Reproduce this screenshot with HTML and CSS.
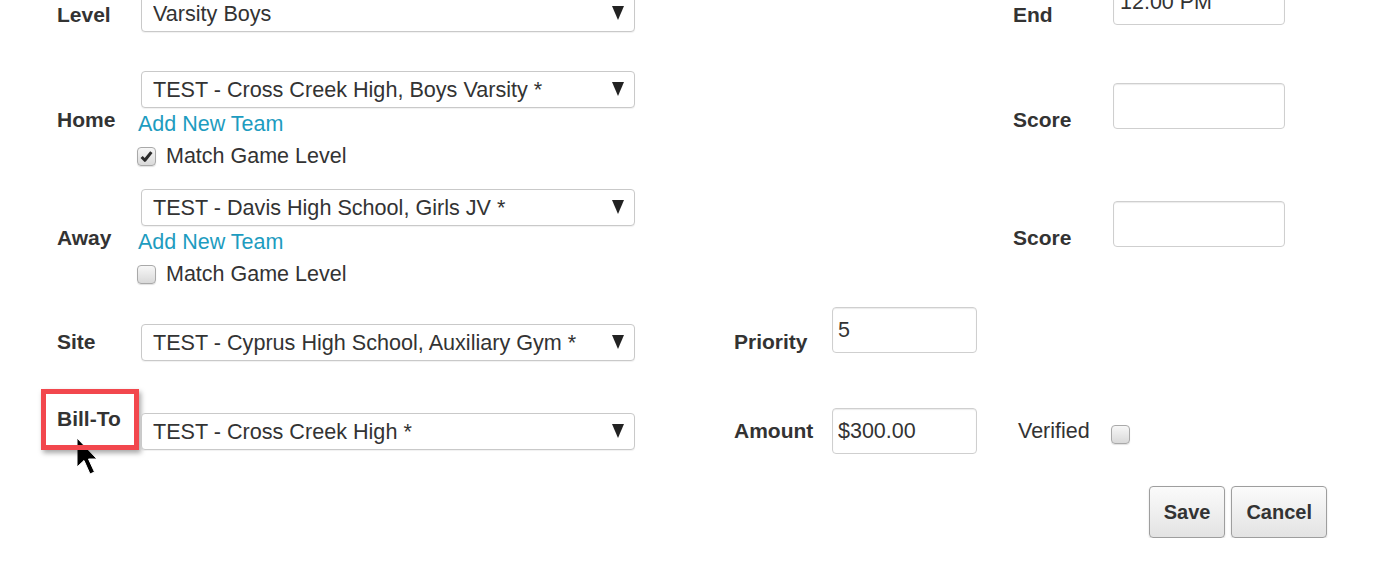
FILE: index.html
```html
<!DOCTYPE html>
<html>
<head>
<meta charset="utf-8">
<title>Edit Game</title>
<link rel="stylesheet" href="styles.css">
</head>
<body>
<form class="game-form">

    <!-- level / end time -->
    <div class="row row-level">
        <label class="lbl c1">Level</label>
        <div class="c2">
            <div class="sel"><select><option>Varsity Boys</option></select></div>
        </div>
        <label class="lbl c7">End</label>
        <div class="c8"><input class="txt txt-end" type="text" value="12:00 PM"></div>
    </div>

    <!-- home team -->
    <div class="row row-team">
        <label class="lbl c1 lbl-team">Home</label>
        <div class="c2 stack">
            <div class="sel"><select><option>TEST - Cross Creek High, Boys Varsity *</option></select></div>
            <a class="add-link" href="javascript:;">Add New Team</a>
            <label class="chk-row"><span class="chk on"><svg viewBox="0 0 12 12" width="13" height="13"><path d="M1.5 6.5 L4.5 9.5 L10.5 2" fill="none" stroke="#2b2b2b" stroke-width="2.8" stroke-linejoin="round"/></svg></span>Match Game Level</label>
        </div>
        <label class="lbl c7 lbl-team">Score</label>
        <div class="c8"><input class="txt txt-score" type="text"></div>
    </div>

    <!-- away team -->
    <div class="row row-team">
        <label class="lbl c1 lbl-team">Away</label>
        <div class="c2 stack">
            <div class="sel"><select><option>TEST - Davis High School, Girls JV *</option></select></div>
            <a class="add-link" href="javascript:;">Add New Team</a>
            <label class="chk-row"><span class="chk"></span>Match Game Level</label>
        </div>
        <label class="lbl c7 lbl-team">Score</label>
        <div class="c8"><input class="txt txt-score" type="text"></div>
    </div>

    <!-- site / priority -->
    <div class="row row-site">
        <label class="lbl c1">Site</label>
        <div class="c2">
            <div class="sel"><select><option>TEST - Cyprus High School, Auxiliary Gym *</option></select></div>
        </div>
        <label class="lbl c4">Priority</label>
        <div class="c5"><input class="txt" type="text" value="5"></div>
    </div>

    <!-- bill-to / amount -->
    <div class="row row-bill">
        <div class="c1 bill-cell">
            <svg class="cursor" viewBox="0 0 22 38" width="22" height="38"><path d="M1 1 L1 30 L8 23.5 L14 37 L18.5 35 L12.5 22 L21 22 Z" fill="#000" stroke="#fff" stroke-width="1"/></svg>
            <label class="lbl lbl-bill">Bill-To</label>
        </div>
        <div class="c2">
            <div class="sel"><select><option>TEST - Cross Creek High *</option></select></div>
        </div>
        <label class="lbl c4">Amount</label>
        <div class="c5"><input class="txt" type="text" value="$300.00"></div>
        <label class="plain c7">Verified</label>
        <div class="c8"><span class="chk chk-verified"></span></div>
    </div>

    <!-- actions -->
    <div class="actions">
        <button type="button" class="btn">Save</button>
        <button type="button" class="btn">Cancel</button>
    </div>

</form>
</body>
</html>
```

FILE: styles.css
```css
html,body{margin:0;padding:0;}
body{background:#fff;color:#333;font:21.5px/24px "Liberation Sans",Arial,sans-serif;overflow:hidden;}
a{color:#1d9cc0;text-decoration:none;}

.game-form{margin:-21px 0 0 57px;}

/* every row shares one column template */
.row{display:grid;grid-template-columns:84px 494px 99px 98px 145px 36px 100px 172px;align-items:start;}
.row-level{height:92px;}
.row-team{height:118px;}
.row-site{height:101px;}
.row-bill{height:78px;}

.c1{grid-column:1;}
.c2{grid-column:2;}
.c4{grid-column:4;}
.c5{grid-column:5;}
.c7{grid-column:7;}
.c8{grid-column:8;}

.lbl{font-weight:bold;font-size:21px;line-height:24px;}
.plain{font-size:21.5px;line-height:24px;}

/* label offsets inside each row */
.row-level .lbl{margin-top:24px;}
.row-level .sel{margin-top:16px;}
.lbl-team{margin-top:37px;}
.row-team .txt-score{margin-top:12px;}
.row-site .lbl{margin-top:23px;}
.row-site .sel{margin-top:17px;}
.row-bill .lbl{margin-top:11px;}
.row-bill .plain{margin-top:11px;padding-left:5px;}
.row-bill .sel{margin-top:5px;}

/* select boxes */
.sel{position:relative;width:494px;}
.sel select{display:block;width:100%;height:37px;margin:0;padding:0 36px 0 11px;border:1.5px solid #c9c9c9;border-radius:4px;background:#fff;color:#333;font:21.6px "Liberation Sans",Arial,sans-serif;-webkit-appearance:none;appearance:none;box-shadow:0 1px 1px rgba(0,0,0,.06);outline:none;}
.sel:after{content:"";position:absolute;right:11px;top:11px;border-left:6px solid transparent;border-right:6px solid transparent;border-top:14px solid #222;pointer-events:none;}

/* text inputs */
.txt{display:block;box-sizing:border-box;width:100%;height:46px;margin:0;padding:0 5px;border:1.5px solid #cfcfcf;border-radius:4px;background:#fff;color:#333;font:21.5px "Liberation Sans",Arial,sans-serif;box-shadow:inset 0 1px 1px rgba(0,0,0,.08);outline:none;}
.txt-end{padding-left:6px;}

/* team stack: select, link, checkbox */
.stack{display:flex;flex-direction:column;align-items:flex-start;}
.add-link{margin:4px 0 0 -3px;}
.chk-row{display:flex;align-items:center;gap:10px;margin:8px 0 0 -4px;}

.chk{display:inline-flex;align-items:center;justify-content:center;box-sizing:border-box;width:19px;height:19px;border:1.5px solid #a9a9a9;border-radius:4px;background:linear-gradient(#f7f7f7,#d9d9d9);box-shadow:0 1px 1px rgba(0,0,0,.12);}
.chk-verified{margin:17px 0 0 -2px;}

/* bill-to label with the red highlight drawn over it */
.bill-cell{position:relative;}
.row-bill .lbl-bill{display:block;position:relative;margin-top:-1px;}
.lbl-bill:before{content:"";position:absolute;left:-16px;top:-18px;width:98px;height:61px;box-sizing:border-box;border:5px solid #f2474d;box-shadow:2px 3px 5px rgba(0,0,0,.35);}
.cursor{position:absolute;left:19px;top:29px;}

/* buttons */
.actions{display:flex;justify-content:flex-end;gap:6px;width:1270px;}
.btn{box-sizing:border-box;height:52px;padding:0 14px;border:1.5px solid #9e9e9e;border-radius:4px;background:linear-gradient(#fbfbfb,#e3e3e3);color:#333;font:bold 20px "Liberation Sans",Arial,sans-serif;box-shadow:0 1px 2px rgba(0,0,0,.15);}
```
